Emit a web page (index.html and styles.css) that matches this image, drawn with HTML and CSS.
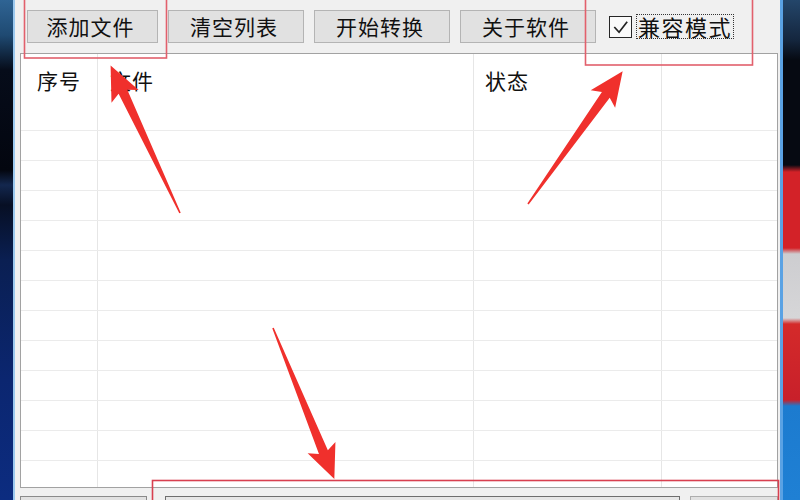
FILE: index.html
```html
<!DOCTYPE html>
<html lang="zh-CN">
<head>
<meta charset="utf-8">
<title>转换工具</title>
<link rel="stylesheet" href="styles.css">
</head>
<body>
<div class="screen">
  <div class="desk-left"></div>
  <div class="window">
    <div class="toolbar">
      <button class="btn">添加文件</button>
      <button class="btn btn-wide">清空列表</button>
      <button class="btn btn-wide">开始转换</button>
      <button class="btn btn-wide">关于软件</button>
      <label class="check">
        <span class="box">
          <svg viewBox="0 0 22 22" width="22" height="22"><path d="M4.5 11 L9.5 16.5 L18 5.5" fill="none" stroke="#222" stroke-width="1.8"/></svg>
        </span>
        <span class="check-label">兼容模式</span>
      </label>
    </div>
    <div class="list">
      <div class="row head">
        <div class="cell c1">序号</div>
        <div class="cell c2">文件</div>
        <div class="cell c3">状态</div>
        <div class="cell c4"></div>
      </div>
      <div class="row"><div class="cell c1"></div><div class="cell c2"></div><div class="cell c3"></div><div class="cell c4"></div></div>
      <div class="row"><div class="cell c1"></div><div class="cell c2"></div><div class="cell c3"></div><div class="cell c4"></div></div>
      <div class="row"><div class="cell c1"></div><div class="cell c2"></div><div class="cell c3"></div><div class="cell c4"></div></div>
      <div class="row"><div class="cell c1"></div><div class="cell c2"></div><div class="cell c3"></div><div class="cell c4"></div></div>
      <div class="row"><div class="cell c1"></div><div class="cell c2"></div><div class="cell c3"></div><div class="cell c4"></div></div>
      <div class="row"><div class="cell c1"></div><div class="cell c2"></div><div class="cell c3"></div><div class="cell c4"></div></div>
      <div class="row"><div class="cell c1"></div><div class="cell c2"></div><div class="cell c3"></div><div class="cell c4"></div></div>
      <div class="row"><div class="cell c1"></div><div class="cell c2"></div><div class="cell c3"></div><div class="cell c4"></div></div>
      <div class="row"><div class="cell c1"></div><div class="cell c2"></div><div class="cell c3"></div><div class="cell c4"></div></div>
      <div class="row"><div class="cell c1"></div><div class="cell c2"></div><div class="cell c3"></div><div class="cell c4"></div></div>
      <div class="row"><div class="cell c1"></div><div class="cell c2"></div><div class="cell c3"></div><div class="cell c4"></div></div>
      <div class="row"><div class="cell c1"></div><div class="cell c2"></div><div class="cell c3"></div><div class="cell c4"></div></div>
      <div class="row"><div class="cell c1"></div><div class="cell c2"></div><div class="cell c3"></div><div class="cell c4"></div></div>
    </div>
    <div class="statusbar">
      <div class="sb-btn sb-left"></div>
      <div class="progress"></div>
      <div class="sb-btn sb-right"></div>
    </div>
  </div>
  <div class="desk-right"></div>

  <svg class="annot" viewBox="0 0 800 500" width="800" height="500">
    <rect x="24.5" y="-5" width="142" height="63" fill="none" stroke="#e2606c" stroke-width="1.6"/>
    <rect x="585.5" y="-5" width="167" height="70" fill="none" stroke="#e2606c" stroke-width="1.6"/>
    <rect x="152.5" y="480.5" width="626" height="40" fill="none" stroke="#d84050" stroke-width="1.6"/>
    <g fill="#f0302c">
      <polygon transform="translate(180 213) rotate(-115.2)" points="0,-0.8 134,-4.8 129,-15 163,0 129,15 134,4.8 0,0.8"/>
      <polygon transform="translate(528 204) rotate(-54.5)" points="0,-0.8 134,-4.8 129,-15 163,0 129,15 134,4.8 0,0.8"/>
      <polygon transform="translate(273 328) rotate(67.9)" points="0,-0.8 134,-4.8 129,-15 163,0 129,15 134,4.8 0,0.8"/>
    </g>
  </svg>
</div>
</body>
</html>
```

FILE: styles.css
```css
* { box-sizing: border-box; }

html, body {
  margin: 0;
  padding: 0;
  background: #000;
}

body {
  font-family: "Noto Sans CJK SC", "Microsoft YaHei", "Noto Sans", sans-serif;
  color: #1a1a1a;
}

.screen {
  position: relative;
  width: 800px;
  height: 500px;
  overflow: hidden;
  display: flex;
}

.desk-left {
  width: 13px;
  flex: none;
  background: linear-gradient(to bottom,
    #2f6494 0, #1f4a72 35px, #060c1a 70px, #03060f 170px,
    #13274e 185px, #070f24 205px, #0a1f52 260px, #0b2670 380px, #0c2c80 500px);
}

.window {
  width: 770px;
  flex: none;
  display: flex;
  flex-direction: column;
  background: #f0f0f0;
  border-left: 2px solid #9cc9ef;
  border-right: 3px solid #5aa2e4;
  overflow: hidden;
}

.desk-right {
  flex: 1;
  background: linear-gradient(to bottom,
    #24466a 0, #14263e 40px, #060a12 60px, #060a12 165px,
    #d32228 172px, #d32228 248px, #cdcdd0 254px, #d6d6d8 318px,
    #d42a2a 324px, #c8202a 400px, #1c7bcf 406px, #1f80d4 500px);
}

/* toolbar */
.toolbar {
  flex: none;
  display: flex;
  align-items: center;
  gap: 10px;
  padding: 10px 0 0 12px;
  height: 43px;
}

.btn {
  width: 131px;
  height: 33px;
  padding: 0 4px 0 0;
  background: #e1e1e1;
  border: 1px solid #b4b4b4;
  font-family: inherit;
  font-size: 21px;
  letter-spacing: 1px;
  color: #111;
  line-height: 31px;
}

.btn-wide { width: 136px; }

.check {
  display: flex;
  align-items: center;
  margin-left: 3px;
  height: 33px;
}

.box {
  width: 23px;
  height: 22px;
  border: 1.5px solid #262626;
  background: #fafafa;
  display: flex;
  align-items: center;
  justify-content: center;
}

.box svg { display: block; }

.check-label {
  margin-left: 4px;
  padding: 0 1px;
  font-size: 22px;
  letter-spacing: 1.5px;
  line-height: 23px;
  border: 1px dotted #333;
  color: #111;
}

/* list */
.list {
  flex: none;
  margin: 10px 0 0 5px;
  width: 758px;
  height: 435px;
  background: #fff;
  border: 1px solid #a2a2a2;
  overflow: hidden;
}

.row {
  display: flex;
  height: 30px;
  border-bottom: 1px solid #ebebeb;
}

.row.head {
  height: 47px;
  border-bottom: none;
}

.cell {
  height: 100%;
  border-right: 1px solid #e6e6e6;
}

.c1 { width: 77px; }
.c2 { width: 376px; }
.c3 { width: 188px; }
.c4 { flex: 1; border-right: none; }

.head .cell {
  font-size: 21px;
  letter-spacing: 1px;
  line-height: 24px;
  padding: 14px 0 0 16px;
  color: #111;
}

.head .c2 { padding-left: 12px; }
.head .c3 { padding-left: 11px; }

/* status bar */
.statusbar {
  flex: none;
  display: flex;
  margin: 8px 0 0 5px;
  gap: 18px;
  height: 30px;
}

.sb-btn, .progress {
  height: 30px;
  background: #e1e1e1;
  border: 1px solid #8a8a8a;
}

.sb-left { width: 127px; }
.progress { width: 515px; background: #e6e6e6; border-color: #6e6e6e; }
.sb-right { width: 88px; margin-left: -8px; border-color: #adadad; }

/* annotations overlay */
.annot {
  position: absolute;
  left: 0;
  top: 0;
  pointer-events: none;
}
```
